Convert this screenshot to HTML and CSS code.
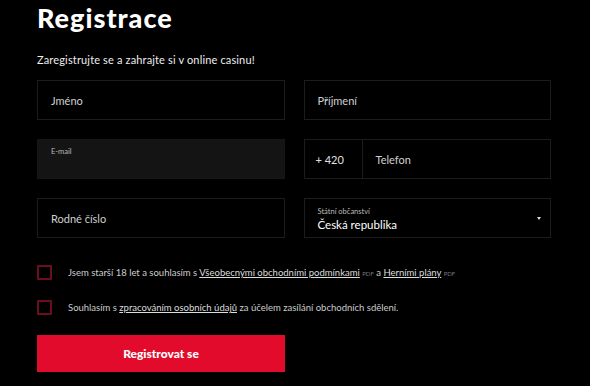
FILE: index.html
```html
<!DOCTYPE html>
<html lang="cs">
<head>
    <meta charset="UTF-8">
    <meta name="viewport" content="width=device-width, initial-scale=1.0">
    <title>Registrace</title>
    <link rel="stylesheet" href="styles.css">
</head>
<body>

<div class="container">
    <h1>Registrace</h1>
    <p class="intro">Zaregistrujte se a zahrajte si v online casinu!</p>

    <div class="form-grid">
        <div class="field">
            <span class="placeholder">Jméno</span>
        </div>
        <div class="field">
            <span class="placeholder">Příjmení</span>
        </div>

        <div class="field field-filled">
            <span class="label">E-mail</span>
        </div>
        <div class="field field-phone">
            <span class="prefix">+ 420</span>
            <span class="placeholder">Telefon</span>
        </div>

        <div class="field">
            <span class="placeholder">Rodné číslo</span>
        </div>
        <div class="field field-select">
            <div class="select-text">
                <span class="label">Státní občanství</span>
                <span class="value">Česká republika</span>
            </div>
            <span class="arrow"></span>
        </div>
    </div>

    <div class="checks">
        <label class="check">
            <span class="box"></span>
            <span>Jsem starší 18 let a souhlasím s <a href="#">Všeobecnými obchodními podmínkami</a> <small>PDF</small> a <a href="#">Herními plány</a> <small>PDF</small></span>
        </label>
        <label class="check">
            <span class="box"></span>
            <span>Souhlasím s <a href="#">zpracováním osobních údajů</a> za účelem zasílání obchodních sdělení.</span>
        </label>
    </div>

    <button class="submit-btn">Registrovat se</button>
</div>

</body>
</html>
```

FILE: styles.css
```css
body {
    margin: 0;
    background-color: #000;
    color: #fff;
    font-family: Lato, "Open Sans", sans-serif;
}
.container {
    width: 514px;
    padding-left: 37px;
}
h1 {
    margin: 0;
    padding-top: 3px;
    font-size: 27px;
    font-weight: 900;
    line-height: 30px;
    letter-spacing: 1px;
}
.intro {
    margin: 20px 0 13px;
    font-size: 11px;
    line-height: 14px;
    color: #eee;
    letter-spacing: 0.15px;
}
.form-grid {
    display: grid;
    grid-template-columns: 1fr 1fr;
    column-gap: 19px;
    row-gap: 19px;
}
.field {
    height: 40px;
    box-sizing: border-box;
    border: 1px solid #1c1c1c;
    display: flex;
    align-items: center;
    padding: 0 13px;
    font-size: 11px;
    color: #d0d0d0;
}
.field-filled {
    background: #141414;
    border-color: #161616;
    align-items: flex-start;
    padding-top: 7px;
}
.label {
    font-size: 7.5px;
    color: #bbb;
}
.field-phone {
    padding: 0;
}
.field-phone .prefix {
    width: 58px;
    height: 100%;
    box-sizing: border-box;
    border-right: 1px solid #1c1c1c;
    display: flex;
    align-items: center;
    padding-left: 11px;
    color: #e0e0e0;
}
.field-phone .placeholder {
    padding-left: 13px;
}
.field-select {
    justify-content: space-between;
    padding-right: 9px;
}
.select-text {
    display: flex;
    flex-direction: column;
    padding-top: 2px;
}
.select-text .value {
    font-size: 11.5px;
    color: #fff;
    margin-top: 2px;
}
.arrow {
    width: 0;
    height: 0;
    border-left: 2.5px solid transparent;
    border-right: 2.5px solid transparent;
    border-top: 3px solid #ddd;
}
.checks {
    margin-top: 27px;
}
.check {
    display: flex;
    align-items: center;
    gap: 16px;
    font-size: 9.5px;
    color: #ccc;
    height: 15px;
    margin-bottom: 20px;
}
.box {
    width: 15px;
    height: 15px;
    box-sizing: border-box;
    border: 2px solid #6a0f1e;
    border-radius: 1px;
    flex-shrink: 0;
}
.check a {
    color: #ddd;
    text-decoration: underline;
}
.check small {
    font-size: 6px;
    color: #777;
}
.submit-btn {
    display: block;
    width: 248px;
    height: 37px;
    margin-top: 0;
    border: none;
    background: #e30b2b;
    color: white;
    font-family: Lato, sans-serif;
    font-size: 12px;
    font-weight: 900;
    cursor: pointer;
}
```
